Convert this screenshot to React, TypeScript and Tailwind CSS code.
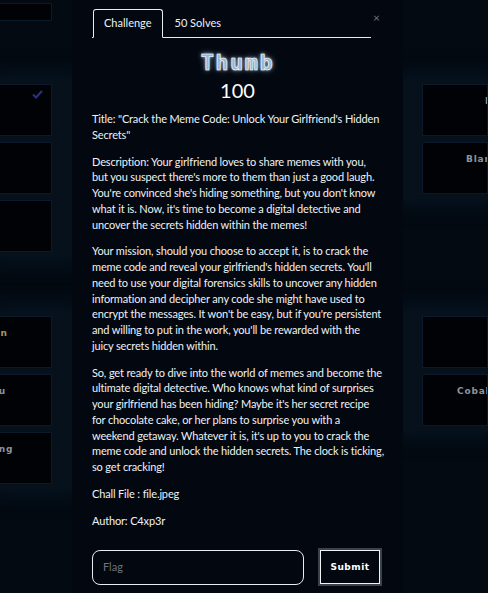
import React from "react";

function BgCard({ text, pad, check, textColor }: { text?: string; pad?: string; check?: boolean; textColor?: string }) {
  return (
    <div className="relative h-[52px] w-full border border-[#0a1a2b] bg-[#000205] overflow-hidden">
      {text ? (
        <div
          className={`whitespace-nowrap pt-[10px] text-[9px] font-bold tracking-[0.8px] ${textColor ?? "text-[#8d939b]"} ${pad ?? ""}`}
          style={{ fontFamily: "'DejaVu Sans', sans-serif" }}
        >
          {text}
        </div>
      ) : null}
      {check ? (
        <svg className="absolute right-[8px] top-[5px]" width="11" height="9" viewBox="0 0 11 9">
          <path d="M1 4.5 L4 7.5 L10 1" stroke="#2b2f8c" strokeWidth="2" fill="none" />
        </svg>
      ) : null}
    </div>
  );
}

function Para({ lines, last }: { lines: string[]; last?: boolean }) {
  return (
    <p className={last ? "" : "mb-[11px]"}>
      {lines.map((l, i) => (
        <React.Fragment key={i}>
          {l}
          {i < lines.length - 1 ? <br /> : null}
        </React.Fragment>
      ))}
    </p>
  );
}

export default function App() {
  return (
    <div
      className="relative h-[593px] w-[488px] overflow-hidden bg-[#01040a]"
      style={{ fontFamily: "Lato, 'Open Sans', sans-serif" }}
    >
      {/* background page */}
      <div className="flex h-full">
        {/* left column */}
        <div className="flex h-full w-[72px] flex-col bg-[#030a12]">
          <div className="ml-[-108px] mt-[3px] w-[160px]">
            <div className="h-[18px] border border-[#0a1a2b] bg-[#000205]" />
          </div>
          <div className="mt-[58px] flex flex-col gap-[6px] bg-[#06111c] py-[5px] shadow-[0_0_16px_6px_rgba(10,30,50,0.5)]">
            <div className="ml-[-108px] w-[160px]"><BgCard check /></div>
            <div className="ml-[-108px] w-[160px]"><BgCard /></div>
            <div className="ml-[-108px] w-[160px]"><BgCard /></div>
          </div>
          <div className="mt-[54px] flex flex-col gap-[6px] bg-[#06111c] py-[5px] shadow-[0_0_16px_6px_rgba(10,30,50,0.5)]">
            <div className="ml-[-108px] w-[160px]"><BgCard text="Hidden" pad="pl-[74px]" textColor="text-[#a89a52]" /></div>
            <div className="ml-[-108px] w-[160px]"><BgCard text="Menu" pad="pl-[82px]" /></div>
            <div className="ml-[-108px] w-[160px]"><BgCard text="Bring" pad="pl-[89px]" /></div>
          </div>
        </div>
        <div className="flex-1" />
        {/* right column */}
        <div className="flex h-full w-[85px] flex-col bg-[#030a12]">
          <div className="mt-[79px] flex flex-col gap-[6px] bg-[#06111c] py-[5px] pl-[19px] shadow-[0_0_16px_6px_rgba(10,30,50,0.5)]">
            <BgCard text="Noir" pad="pl-[62px]" />
            <BgCard text="Blanco" pad="pl-[43px]" />
          </div>
          <div className="mt-[112px] flex flex-col gap-[6px] bg-[#06111c] py-[5px] pl-[19px] shadow-[0_0_16px_6px_rgba(10,30,50,0.5)]">
            <BgCard />
            <BgCard text="Cobalt Strike" pad="pl-[34px]" />
          </div>
        </div>
      </div>

      {/* modal */}
      <div className="absolute left-[72px] top-0 h-full w-[331px] bg-[#030810] pl-[20px] pr-[20px] text-[#eef2f6]">
        <div className="flex items-start pt-[9px]">
          <div className="flex flex-1 border-b border-[#e8ecf0] pl-[1px]">
            <div className="mb-[-1px] flex h-[29px] items-center rounded-t-[3px] border border-b-[#030810] border-[#e8ecf0] px-[10px] text-[11px]">
              Challenge
            </div>
            <div className="flex h-[28px] items-center px-[12px] text-[11px]">50 Solves</div>
          </div>
          <div className="w-[12px] pl-[2px] pt-[3px] text-[12px] leading-none text-[#6e747b]">×</div>
        </div>

        <div
          className="mt-[12px] text-center text-[22px] font-bold leading-[26px] tracking-[1.5px] text-[#94b8da]"
          style={{
            fontFamily: "'DejaVu Sans Mono', monospace",
            WebkitTextStroke: "0.6px #ffffff",
            textShadow: "0 0 3px rgba(255,255,255,0.75), 0 0 6px rgba(170,205,240,0.6)",
          }}
        >
          Thumb
        </div>
        <div className="mt-[2px] text-center text-[20px] leading-[24px] text-white">100</div>

        <div className="mr-[-10px] mt-[9px] text-[11px] leading-[15.75px] tracking-[-0.15px]">
          <Para lines={["Title: \"Crack the Meme Code: Unlock Your Girlfriend's Hidden", "Secrets\""]} />
          <Para
            lines={[
              "Description: Your girlfriend loves to share memes with you,",
              "but you suspect there's more to them than just a good laugh.",
              "You're convinced she's hiding something, but you don't know",
              "what it is. Now, it's time to become a digital detective and",
              "uncover the secrets hidden within the memes!",
            ]}
          />
          <Para
            lines={[
              "Your mission, should you choose to accept it, is to crack the",
              "meme code and reveal your girlfriend's hidden secrets. You'll",
              "need to use your digital forensics skills to uncover any hidden",
              "information and decipher any code she might have used to",
              "encrypt the messages. It won't be easy, but if you're persistent",
              "and willing to put in the work, you'll be rewarded with the",
              "juicy secrets hidden within.",
            ]}
          />
          <Para
            lines={[
              "So, get ready to dive into the world of memes and become the",
              "ultimate digital detective. Who knows what kind of surprises",
              "your girlfriend has been hiding? Maybe it's her secret recipe",
              "for chocolate cake, or her plans to surprise you with a",
              "weekend getaway. Whatever it is, it's up to you to crack the",
              "meme code and unlock the hidden secrets. The clock is ticking,",
              "so get cracking!",
            ]}
          />
          <Para lines={["Chall File : file.jpeg"]} />
          <Para lines={["Author: C4xp3r"]} last />
        </div>

        <div className="mt-[20px] flex items-center">
          <div className="flex h-[35px] w-[212px] items-center rounded-[8px] border border-[#e8ecf0] px-[10px] text-[11px] text-[#6d737a]">
            Flag
          </div>
          <div className="ml-[14px] flex h-[38px] w-[64px] items-center justify-center border-[2px] border-[#3a424b] p-0">
            <div
              className="flex h-full w-full items-center justify-center border border-[#f0f3f6] text-[9px] font-bold tracking-[0.5px] text-white"
              style={{ fontFamily: "'DejaVu Sans', sans-serif" }}
            >
              Submit
            </div>
          </div>
        </div>
      </div>
    </div>
  );
}
